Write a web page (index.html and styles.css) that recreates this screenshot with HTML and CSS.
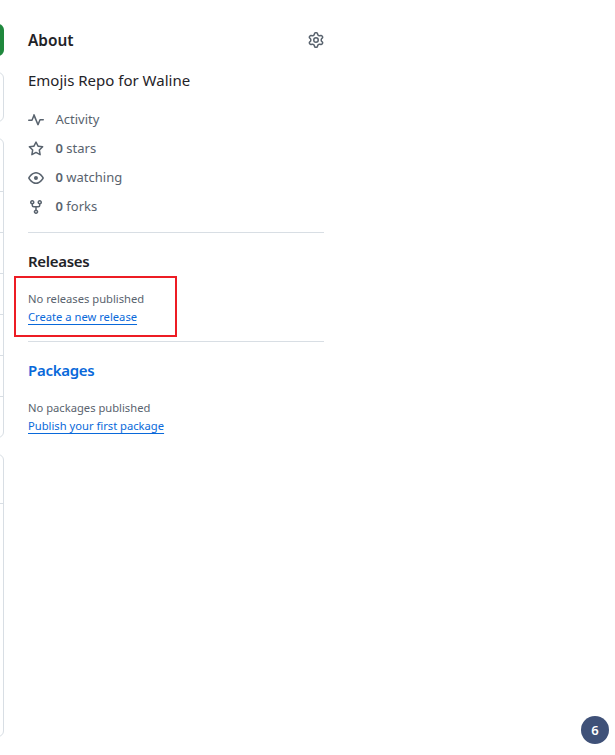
FILE: index.html
```html
<!DOCTYPE html>
<html lang="en">
<head>
<meta charset="utf-8">
<title>Emojis Repo for Waline</title>
<link rel="stylesheet" href="styles.css">
</head>
<body>
<div class="layout">
  <div class="main-col">
    <div class="code-btn"></div>
    <div class="box box-clone"></div>
    <div class="box box-files">
      <div class="file-row"></div>
      <div class="file-row"></div>
      <div class="file-row"></div>
      <div class="file-row"></div>
      <div class="file-row"></div>
      <div class="file-row"></div>
    </div>
    <div class="box box-readme">
      <div class="readme-head"></div>
    </div>
  </div>
  <aside class="sidebar">
    <section class="about">
      <div class="about-head">
        <h2 class="heading heading-about">About</h2>
        <svg class="icon" width="16" height="16" viewBox="0 0 16 16"><path d="M8 0a8.2 8.2 0 0 1 .701.031C9.444.095 9.99.645 10.16 1.29l.288 1.107c.018.066.079.158.212.224.231.114.454.243.668.386.123.082.233.09.299.071l1.103-.303c.644-.176 1.392.021 1.82.63.27.385.506.792.704 1.218.315.675.111 1.422-.364 1.891l-.814.806c-.049.048-.098.147-.088.294.016.257.016.515 0 .772-.01.147.038.246.088.294l.814.806c.475.469.679 1.216.364 1.891a7.977 7.977 0 0 1-.704 1.217c-.428.61-1.176.807-1.82.63l-1.102-.302c-.067-.019-.177-.011-.3.071a5.909 5.909 0 0 1-.668.386c-.133.066-.194.158-.211.224l-.29 1.106c-.168.646-.715 1.196-1.458 1.26a8.006 8.006 0 0 1-1.402 0c-.743-.064-1.289-.614-1.458-1.26l-.289-1.106c-.018-.066-.079-.158-.212-.224a5.738 5.738 0 0 1-.668-.386c-.123-.082-.233-.09-.299-.071l-1.103.303c-.644.176-1.392-.021-1.82-.63a8.12 8.12 0 0 1-.704-1.218c-.315-.675-.111-1.422.363-1.891l.815-.806c.05-.048.098-.147.088-.294a6.214 6.214 0 0 1 0-.772c.01-.147-.038-.246-.088-.294l-.815-.806C.635 6.045.431 5.298.746 4.623a7.92 7.92 0 0 1 .704-1.217c.428-.61 1.176-.807 1.82-.63l1.102.302c.067.019.177.011.3-.071.214-.143.437-.272.668-.386.133-.066.194-.158.211-.224l.29-1.106C6.009.645 6.556.095 7.299.03 7.53.01 7.764 0 8 0Zm-.571 1.525c-.036.003-.108.036-.137.146l-.289 1.105c-.147.561-.549.967-.998 1.189-.173.086-.34.183-.5.29-.417.278-.97.423-1.529.27l-1.103-.303c-.109-.03-.175.016-.195.045-.22.312-.412.644-.573.99-.014.031-.021.11.059.19l.815.806c.411.406.562.957.53 1.456a4.709 4.709 0 0 0 0 .582c.032.499-.119 1.05-.53 1.456l-.815.806c-.081.08-.073.159-.059.19.162.346.353.677.573.989.02.03.085.076.195.046l1.102-.303c.56-.153 1.113-.008 1.53.27.161.107.328.204.501.29.447.222.85.629.997 1.189l.289 1.105c.029.109.101.143.137.146a6.6 6.6 0 0 0 1.142 0c.036-.003.108-.036.137-.146l.289-1.105c.147-.561.549-.967.998-1.189.173-.086.34-.183.5-.29.417-.278.97-.423 1.529-.27l1.103.303c.109.029.175-.016.195-.045.22-.313.411-.644.573-.99.014-.031.021-.11-.059-.19l-.815-.806c-.411-.406-.562-.957-.53-1.456a4.709 4.709 0 0 0 0-.582c-.032-.499.119-1.05.53-1.456l.815-.806c.081-.08.073-.159.059-.19a6.464 6.464 0 0 0-.573-.989c-.02-.03-.085-.076-.195-.046l-1.102.303c-.56.153-1.113.008-1.53-.27a4.44 4.44 0 0 0-.501-.29c-.447-.222-.85-.629-.997-1.189l-.289-1.105c-.029-.11-.101-.143-.137-.146a6.6 6.6 0 0 0-1.142 0ZM11 8a3 3 0 1 1-6 0 3 3 0 0 1 6 0ZM9.5 8a1.5 1.5 0 1 0-3.001.001A1.5 1.5 0 0 0 9.5 8Z"/></svg>
      </div>
      <p class="desc">Emojis Repo for Waline</p>
      <ul class="stats">
        <li class="stat"><svg class="icon" width="16" height="16" viewBox="0 0 16 16"><path d="M6 2c.306 0 .582.187.696.471L10 10.731l1.304-3.26A.751.751 0 0 1 12 7h3.25a.75.75 0 0 1 0 1.5h-2.742l-1.812 4.528a.751.751 0 0 1-1.392 0L6 5.269 4.696 8.529A.751.751 0 0 1 4 9H.75a.75.75 0 0 1 0-1.5h2.742l1.812-4.529A.751.751 0 0 1 6 2Z"/></svg><span>Activity</span></li>
        <li class="stat"><svg class="icon" width="16" height="16" viewBox="0 0 16 16"><path d="M8 .25a.75.75 0 0 1 .673.418l1.882 3.815 4.21.612a.75.75 0 0 1 .416 1.279l-3.046 2.97.719 4.192a.751.751 0 0 1-1.088.791L8 12.347l-3.766 1.98a.75.75 0 0 1-1.088-.79l.72-4.194L.818 6.374a.75.75 0 0 1 .416-1.28l4.21-.611L7.327.668A.75.75 0 0 1 8 .25Zm0 2.445L6.615 5.5a.75.75 0 0 1-.564.41l-3.097.45 2.24 2.184a.75.75 0 0 1 .216.664l-.528 3.084 2.769-1.456a.75.75 0 0 1 .698 0l2.77 1.456-.53-3.084a.75.75 0 0 1 .216-.664l2.24-2.183-3.096-.45a.75.75 0 0 1-.564-.41L8 2.694Z"/></svg><span><b>0</b> stars</span></li>
        <li class="stat"><svg class="icon" width="16" height="16" viewBox="0 0 16 16"><path d="M8 2c1.981 0 3.671.992 4.933 2.078 1.27 1.091 2.187 2.345 2.637 3.023a1.62 1.62 0 0 1 0 1.798c-.45.678-1.367 1.932-2.637 3.023C11.67 13.008 9.981 14 8 14c-1.981 0-3.671-.992-4.933-2.078C1.797 10.83.88 9.576.43 8.898a1.62 1.62 0 0 1 0-1.798c.45-.677 1.367-1.931 2.637-3.022C4.33 2.992 6.019 2 8 2ZM1.679 7.932a.12.12 0 0 0 0 .136c.411.622 1.241 1.75 2.366 2.717C5.176 11.758 6.527 12.5 8 12.5c1.473 0 2.825-.742 3.955-1.715 1.124-.967 1.954-2.096 2.366-2.717a.12.12 0 0 0 0-.136c-.412-.621-1.242-1.75-2.366-2.717C10.824 4.242 9.473 3.5 8 3.5c-1.473 0-2.825.742-3.955 1.715-1.124.967-1.954 2.096-2.366 2.717ZM8 10a2 2 0 1 1-.001-3.999A2 2 0 0 1 8 10Z"/></svg><span><b>0</b> watching</span></li>
        <li class="stat"><svg class="icon" width="16" height="16" viewBox="0 0 16 16"><path d="M5 5.372v.878c0 .414.336.75.75.75h4.5a.75.75 0 0 0 .75-.75v-.878a2.25 2.25 0 1 1 1.5 0v.878a2.25 2.25 0 0 1-2.25 2.25h-1.5v2.128a2.251 2.251 0 1 1-1.5 0V8.5h-1.5A2.25 2.25 0 0 1 3.5 6.25v-.878a2.25 2.25 0 1 1 1.5 0ZM5 3.25a.75.75 0 1 0-1.5 0 .75.75 0 0 0 1.5 0Zm6.75.75a.75.75 0 1 0 0-1.5.75.75 0 0 0 0 1.5Zm-3 8.75a.75.75 0 1 0-1.5 0 .75.75 0 0 0 1.5 0Z"/></svg><span><b>0</b> forks</span></li>
      </ul>
    </section>
    <section class="block block-releases">
      <h2 class="heading">Releases</h2>
      <div class="note">No releases published</div>
      <a class="link" href="#">Create a new release</a>
    </section>
    <section class="block block-packages">
      <h2 class="heading heading-link">Packages</h2>
      <div class="note">No packages published</div>
      <a class="link" href="#">Publish your first package</a>
    </section>
  </aside>
</div>
<div class="highlight"></div>
<div class="badge">6</div>
</body>
</html>
```
FILE: styles.css
```css
* { box-sizing: border-box; }
html, body { margin: 0; padding: 0; height: 100%; background: #fff; overflow: hidden; }
body { font-family: "Noto Sans", "Liberation Sans", sans-serif; color: #1f2328; }
.layout { display: flex; align-items: flex-start; }
.main-col { width: 4px; flex: none; padding-top: 24px; display: flex; flex-direction: column; align-items: flex-end; }
.code-btn { width: 40px; height: 32px; flex: none; background: #1f883d; border-radius: 6px; }
.box { width: 40px; flex: none; border: 1px solid #d8dee4; border-radius: 6px; background: #fff; }
.box-clone { height: 50px; margin-top: 16px; }
.box-files { height: 300px; margin-top: 16px; padding-top: 52px; }
.file-row { height: 41px; border-top: 1px solid #d8dee4; }
.box-readme { height: 283px; margin-top: 16px; }
.readme-head { height: 49px; border-bottom: 1px solid #d8dee4; }
.sidebar { width: 296px; margin-left: 24px; flex: none; padding-top: 24px; }
.about-head { display: flex; justify-content: space-between; align-items: center; height: 32px; }
.heading { margin: 0; font-size: 15px; letter-spacing: -0.3px; line-height: 24px; font-weight: 600; color: #1f2328; }
.heading-about { font-size: 15.4px; letter-spacing: 0; padding-top: 2px; }
.heading-link { color: #0969da; }
.icon { fill: #59636e; display: block; flex: none; }
.desc { margin: 12px 0 0; font-size: 15px; line-height: 24px; }
.stats { list-style: none; margin: 17px 0 0; padding: 0; display: flex; flex-direction: column; gap: 8px; }
.stat { display: flex; align-items: center; gap: 11.5px; height: 21px; font-size: 13px; line-height: 21px; color: #59636e; }
.stat b { font-weight: 600; }
.block { border-top: 1px solid #d8dee4; }
.block-releases { margin-top: 15px; padding: 16px 0 15px; }
.block-packages { padding-top: 16px; }
.note { margin-top: 17px; font-size: 11.2px; line-height: 18px; color: #59636e; }
.link { display: block; width: max-content; font-size: 11.2px; line-height: 18px; color: #0969da; text-decoration: underline; text-underline-offset: 3px; }
.highlight { position: absolute; left: 14px; top: 276px; width: 163px; height: 61px; border: 2px solid #ed1c24; }
.badge { position: absolute; left: 581px; top: 716px; width: 28px; height: 28px; border-radius: 50%; background: #3f5178; color: #fff; font-size: 13px; font-weight: 600; display: flex; align-items: center; justify-content: center; }
```
